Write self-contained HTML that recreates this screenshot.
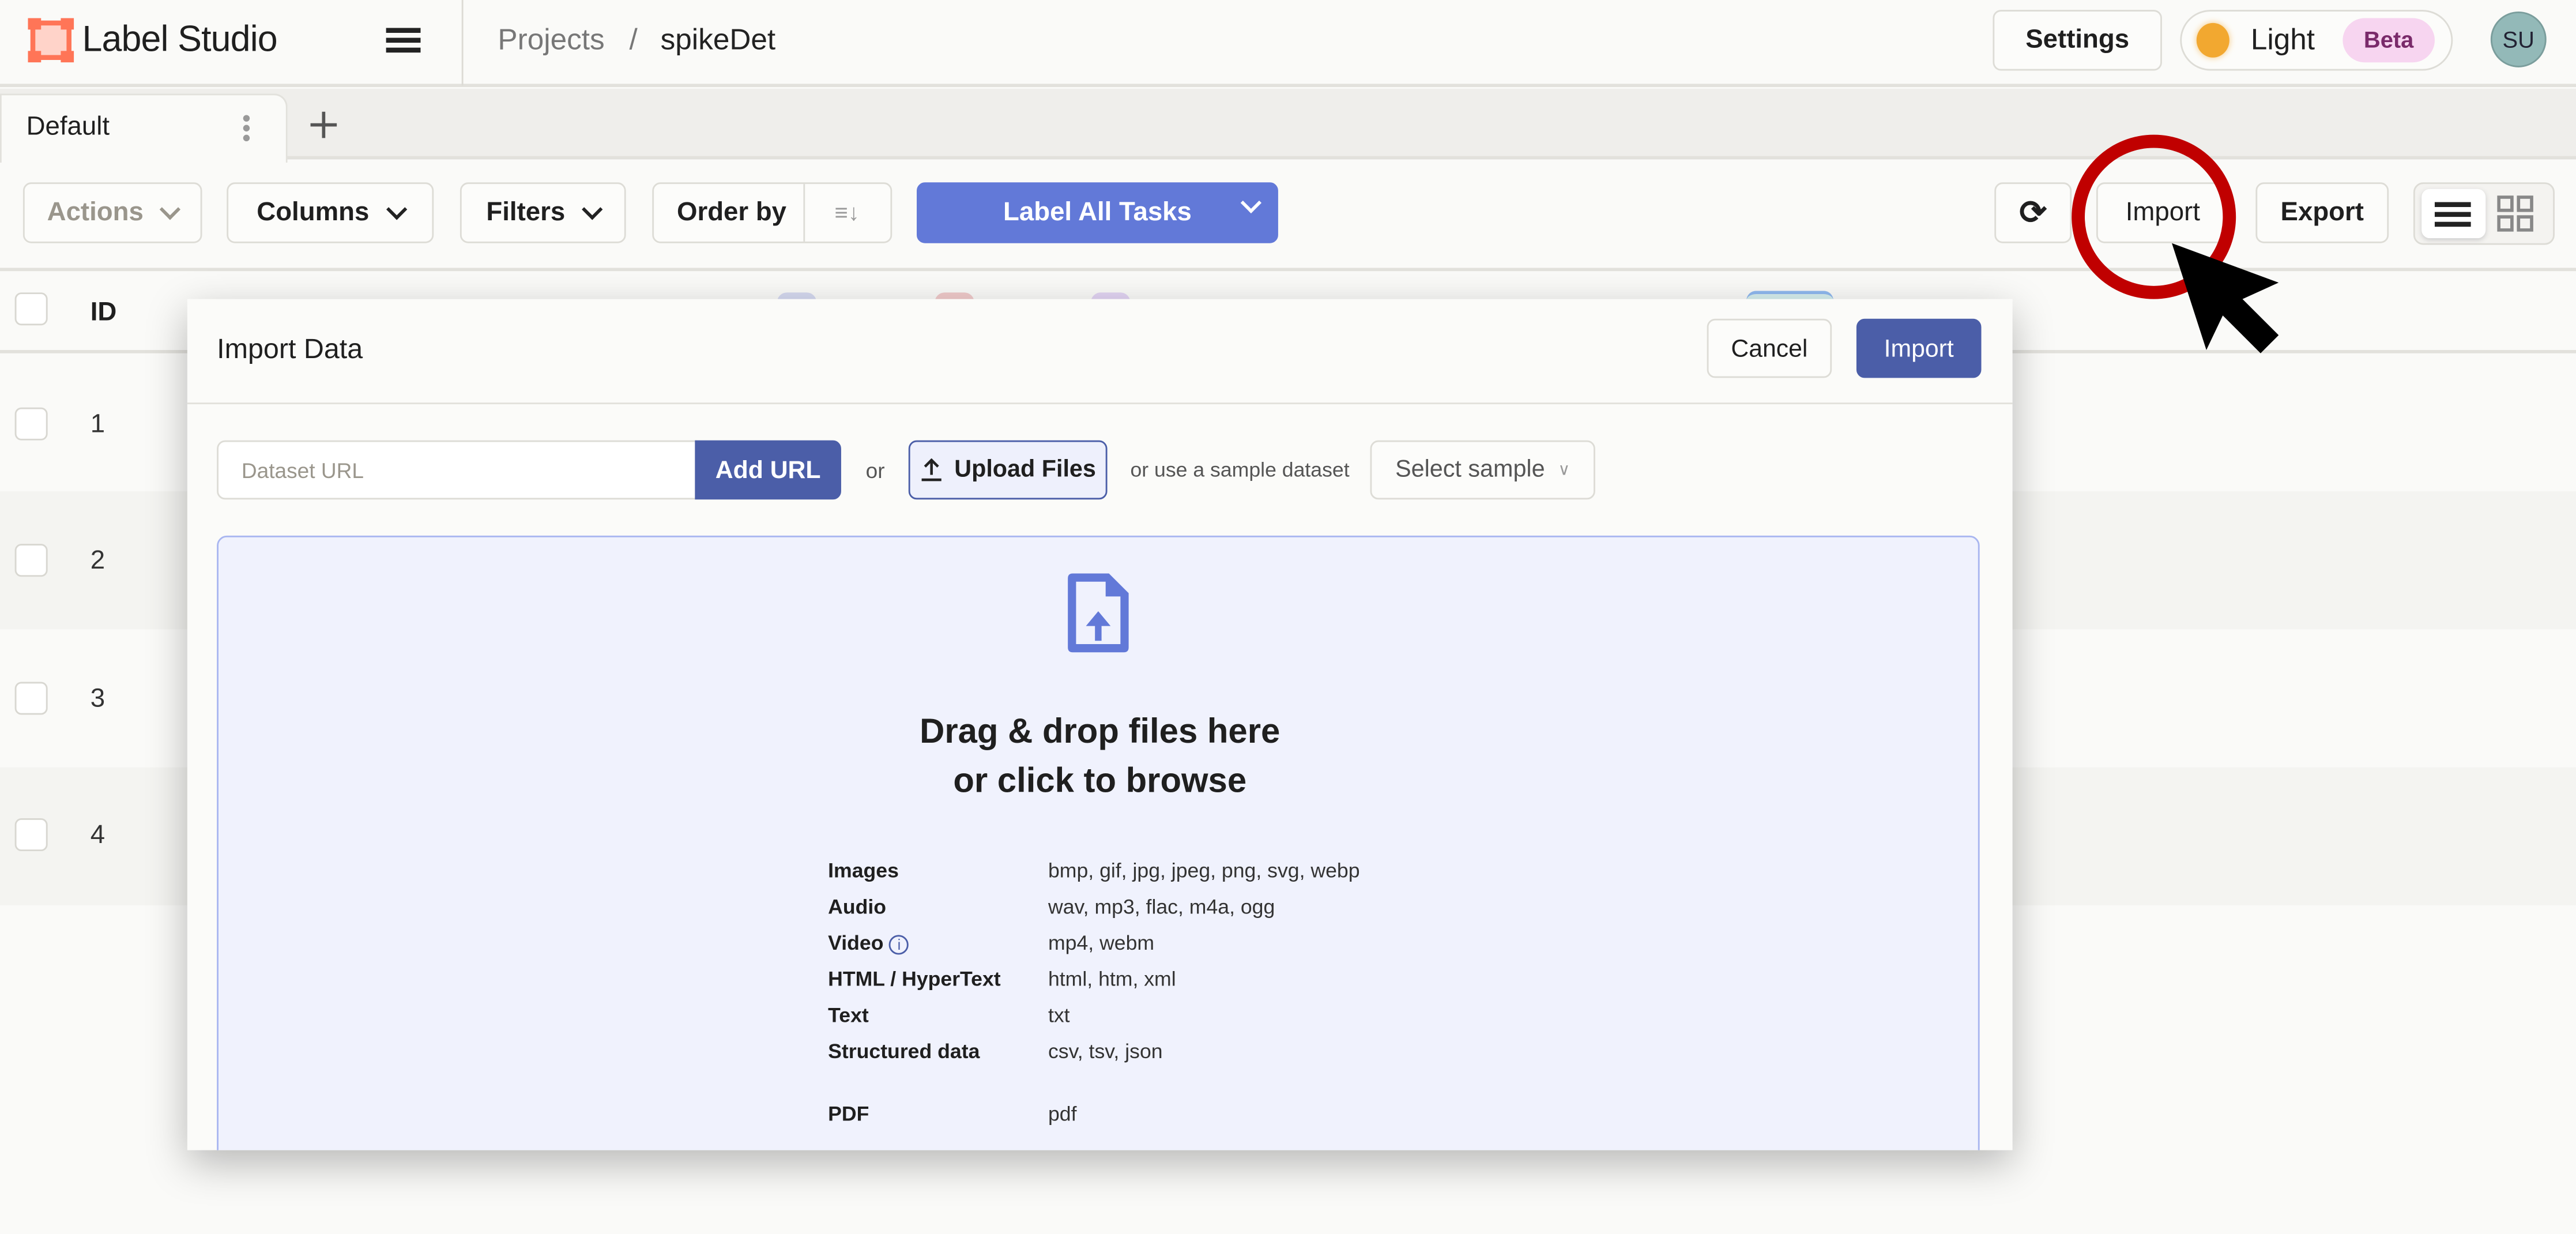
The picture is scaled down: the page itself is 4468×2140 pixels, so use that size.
<!DOCTYPE html>
<html><head><meta charset="utf-8"><style>
*{box-sizing:border-box;margin:0;padding:0}
html,body{width:4468px;height:2140px;overflow:hidden;background:#fafaf8}
#s{position:absolute;left:0;top:0;width:1568px;height:751px;transform:scale(2.8495);transform-origin:0 0;font-family:"Liberation Sans",sans-serif;color:#1f1f1f;background:#fafaf8}
.a{position:absolute}
.btn{position:absolute;border:1px solid #dddcd6;border-radius:5px;background:#fcfcfa;display:flex;align-items:center;justify-content:center;font-size:16px;font-weight:600;color:#1f1f1f}
.chev{display:inline-block;width:9px;height:9px;border-right:2px solid #222;border-bottom:2px solid #222;transform:rotate(45deg);margin-left:12px;margin-top:-5px}
.row{position:absolute;left:0;width:1568px;height:84px}
.cb{position:absolute;width:20px;height:20px;border:1px solid #d8d7d1;border-radius:4px;background:#fff}
.num{position:absolute;left:55px;font-size:16px;color:#333}
.ft{position:absolute;font-size:12.5px;color:#333}
.ft b{font-weight:700;color:#1f1f1f}
</style></head><body><div id="s">
<div class="a" style="left:0;top:0;width:1568px;height:53px;border-bottom:2px solid #e2e1dc"></div>
<svg class="a" style="left:17px;top:11px" width="28" height="27" viewBox="0 0 28 27"><rect x="3" y="3" width="22" height="21" fill="#ffd3c9" stroke="#ff7557" stroke-width="3"/><rect x="0" y="0" width="8" height="7" fill="#ff7557"/><rect x="20" y="0" width="8" height="7" fill="#ff7557"/><rect x="0" y="20" width="8" height="7" fill="#ff7557"/><rect x="20" y="20" width="8" height="7" fill="#ff7557"/></svg>
<div class="a" style="left:50px;top:11px;font-size:22px;letter-spacing:-0.3px">Label Studio</div>
<div class="a" style="left:235px;top:17px;width:21px;height:3px;background:#222;box-shadow:0 6px 0 #222,0 12px 0 #222"></div>
<div class="a" style="left:281px;top:0;width:1px;height:52px;background:#dcdbd5"></div>
<div class="a" style="left:303px;top:14px;font-size:18px;color:#777"><span>Projects</span><span style="margin-left:15px">/</span><span style="margin-left:14px;color:#222">spikeDet</span></div>
<div class="btn" style="left:1213px;top:6px;width:103px;height:37px">Settings</div>
<div class="a" style="left:1327px;top:6px;width:166px;height:37px;border:1px solid #dddcd6;border-radius:19px;background:#fcfcfa"></div>
<div class="a" style="left:1337px;top:14px;width:20px;height:21px;border-radius:50%;background:#f2a830;box-shadow:0 0 4px #f7c77a"></div>
<div class="a" style="left:1370px;top:14px;font-size:18px">Light</div>
<div class="a" style="left:1426px;top:11px;width:56px;height:27px;border-radius:14px;background:#f7d5f0;color:#7a2a6a;font-size:14px;font-weight:600;text-align:center;line-height:27px">Beta</div>
<div class="a" style="left:1516px;top:7px;width:34px;height:34px;border-radius:50%;background:#93b9b8;border:1px solid #7a9d9c;font-size:14px;text-align:center;line-height:32px;color:#223">SU</div>
<div class="a" style="left:0;top:54px;width:1568px;height:43px;background:#efeeeb;border-bottom:2px solid #e2e1dc"></div>
<div class="a" style="left:0;top:57px;width:175px;height:42px;background:#fafaf8;border:1px solid #e2e1dc;border-bottom:none;border-radius:0 8px 0 0"></div>
<div class="a" style="left:16px;top:69px;font-size:16px">Default</div>
<div class="a" style="left:148px;top:70px;width:4px;height:4px;border-radius:50%;background:#999;box-shadow:0 6px 0 #999,0 12px 0 #999"></div>
<div class="a" style="left:189px;top:75px;width:16px;height:2px;background:#555"></div>
<div class="a" style="left:196px;top:68px;width:2px;height:16px;background:#555"></div>
<div class="btn" style="left:14px;top:111px;width:109px;height:37px;color:#9a968c">Actions<span class="chev" style="border-color:#9a968c"></span></div>
<div class="btn" style="left:138px;top:111px;width:126px;height:37px">Columns<span class="chev"></span></div>
<div class="btn" style="left:280px;top:111px;width:101px;height:37px">Filters<span class="chev"></span></div>
<div class="btn" style="left:397px;top:111px;width:146px;height:37px;justify-content:flex-start;padding-left:14px">Order by</div>
<div class="a" style="left:489px;top:112px;width:1px;height:35px;background:#dddcd6"></div>
<div class="a" style="left:508px;top:121px;font-size:14px;color:#999">≡↓</div>
<div class="btn" style="left:558px;top:111px;width:220px;height:37px;background:#6279d8;border-color:#6279d8;color:#fff">Label All Tasks</div>
<span class="a chev" style="left:745px;top:124px;border-color:#fff"></span>
<div class="btn" style="left:1214px;top:111px;width:47px;height:37px;font-size:20px">⟳</div>
<div class="btn" style="left:1276px;top:111px;width:81px;height:37px;font-weight:500">Import</div>
<div class="btn" style="left:1373px;top:111px;width:81px;height:37px">Export</div>
<div class="a" style="left:1469px;top:111px;width:86px;height:38px;border:1px solid #dddcd6;border-radius:6px;background:#f4f3f0"></div>
<div class="a" style="left:1474px;top:115px;width:39px;height:30px;border-radius:5px;background:#fff;box-shadow:0 1px 3px #ccc"></div>
<div class="a" style="left:1482px;top:123px;width:22px;height:2.5px;background:#222;box-shadow:0 6px 0 #222,0 12px 0 #222"></div>
<svg class="a" style="left:1520px;top:119px" width="22" height="22"><g fill="none" stroke="#888" stroke-width="2"><rect x="1" y="1" width="8" height="8"/><rect x="13" y="1" width="8" height="8"/><rect x="1" y="13" width="8" height="8"/><rect x="13" y="13" width="8" height="8"/></g></svg>
<div class="a" style="left:0;top:163px;width:1568px;height:2px;background:#e2e1dc"></div>
<div class="a" style="left:0;top:213px;width:1568px;height:2px;background:#e2e1dc"></div>
<div class="cb" style="left:9px;top:178px"></div>
<div class="a" style="left:55px;top:182px;font-size:16px;font-weight:600">ID</div>
<div class="row" style="top:299px;background:#f4f4f1"></div>
<div class="row" style="top:467px;background:#f4f4f1"></div>
<div class="cb" style="left:9px;top:248px"></div><div class="num" style="top:250px">1</div>
<div class="cb" style="left:9px;top:331px"></div><div class="num" style="top:333px">2</div>
<div class="cb" style="left:9px;top:415px"></div><div class="num" style="top:417px">3</div>
<div class="cb" style="left:9px;top:498px"></div><div class="num" style="top:500px">4</div>
<div class="a" style="left:473px;top:178px;width:24px;height:10px;border-radius:6px 6px 0 0;background:#d5d9f0"></div>
<div class="a" style="left:569px;top:178px;width:24px;height:10px;border-radius:6px 6px 0 0;background:#f0caca"></div>
<div class="a" style="left:664px;top:178px;width:24px;height:10px;border-radius:6px 6px 0 0;background:#e2d4f3"></div>
<div class="a" style="left:1063px;top:177px;width:53px;height:10px;border-radius:6px 6px 0 0;background:#d6eeee;border-top:2px solid #8fb8ef"></div>
<div class="a" style="left:114px;top:182px;width:1111px;height:518px;background:#fbfbf9;box-shadow:0 8px 24px rgba(0,0,0,.28);overflow:hidden">
 <div class="a" style="left:18px;top:21px;font-size:17px">Import Data</div>
 <div class="btn" style="left:925px;top:12px;width:76px;height:36px;font-size:15px;font-weight:500">Cancel</div>
 <div class="btn" style="left:1016px;top:12px;width:76px;height:36px;font-size:15px;font-weight:500;background:#4b5ea8;border-color:#4b5ea8;color:#fff">Import</div>
 <div class="a" style="left:0;top:63px;width:1111px;height:1px;background:#e2e1dc"></div>
 <div class="a" style="left:18px;top:86px;width:292px;height:36px;border:1px solid #dddcd6;border-radius:5px 0 0 5px;background:#fff;font-size:13px;color:#9a968c;padding:10px 14px">Dataset URL</div>
 <div class="btn" style="left:309px;top:86px;width:89px;height:36px;background:#4b5ea8;border-color:#4b5ea8;color:#fff;font-size:15px;border-radius:0 5px 5px 0">Add URL</div>
 <div class="a" style="left:413px;top:97px;font-size:13px;color:#555">or</div>
 <div class="btn" style="left:439px;top:86px;width:121px;height:36px;background:#eef0fc;border-color:#4b5ea8;font-size:14.5px;font-weight:600"><svg width="14" height="14" style="margin-right:7px"><path d="M7 1 V10 M3 5 L7 1 L11 5 M1 13 H13" stroke="#222" stroke-width="1.6" fill="none"/></svg>Upload Files</div>
 <div class="a" style="left:574px;top:97px;font-size:12.5px;color:#555">or use a sample dataset</div>
 <div class="btn" style="left:720px;top:86px;width:137px;height:36px;font-size:14.5px;font-weight:400;color:#555">Select sample <span style="font-size:10px;margin-left:8px;color:#999">∨</span></div>
 <div class="a" style="left:18px;top:144px;width:1073px;height:400px;background:#f0f2fd;border:1px solid #a9b6f0;border-radius:6px"></div>
 <svg class="a" style="left:535px;top:166px" width="40" height="50" viewBox="0 0 40 50"><path d="M4 1 H26 L38 13 V46 Q38 49 35 49 H4 Q1 49 1 46 V4 Q1 1 4 1 Z" fill="#6279d8"/><path d="M6 6 H24 V15 H33 V44 H6 Z" fill="#f0f2fd"/><path d="M19.5 42 V29" stroke="#6279d8" stroke-width="4"/><path d="M12 33 L19.5 24 L27 33 Z" fill="#6279d8"/></svg>
 <div class="a" style="left:0;top:249px;width:1111px;text-align:center;font-size:21px;font-weight:600;line-height:30px">Drag &amp; drop files here<br>or click to browse</div>
 <div class="ft" style="left:390px;top:337px;line-height:22px"><b>Images</b><br><b>Audio</b><br><b>Video</b> <span style="display:inline-block;width:12px;height:12px;border:1px solid #4b5ea8;border-radius:50%;font-size:9px;line-height:10px;text-align:center;color:#4b5ea8">i</span><br><b>HTML / HyperText</b><br><b>Text</b><br><b>Structured data</b></div>
 <div class="ft" style="left:524px;top:337px;line-height:22px">bmp, gif, jpg, jpeg, png, svg, webp<br>wav, mp3, flac, m4a, ogg<br>mp4, webm<br>html, htm, xml<br>txt<br>csv, tsv, json</div>
 <div class="ft" style="left:390px;top:489px"><b>PDF</b></div>
 <div class="ft" style="left:524px;top:489px">pdf</div>
</div>
<svg class="a" style="left:0;top:0" width="1568" height="751"><ellipse cx="1311" cy="132" rx="46" ry="46" fill="none" stroke="#c00000" stroke-width="8"/><path d="M1322 148 L1387 172 L1365 182 L1387 204 L1376 215 L1353 192 L1343 213 Z" fill="#000"/></svg>
</div></body></html>
